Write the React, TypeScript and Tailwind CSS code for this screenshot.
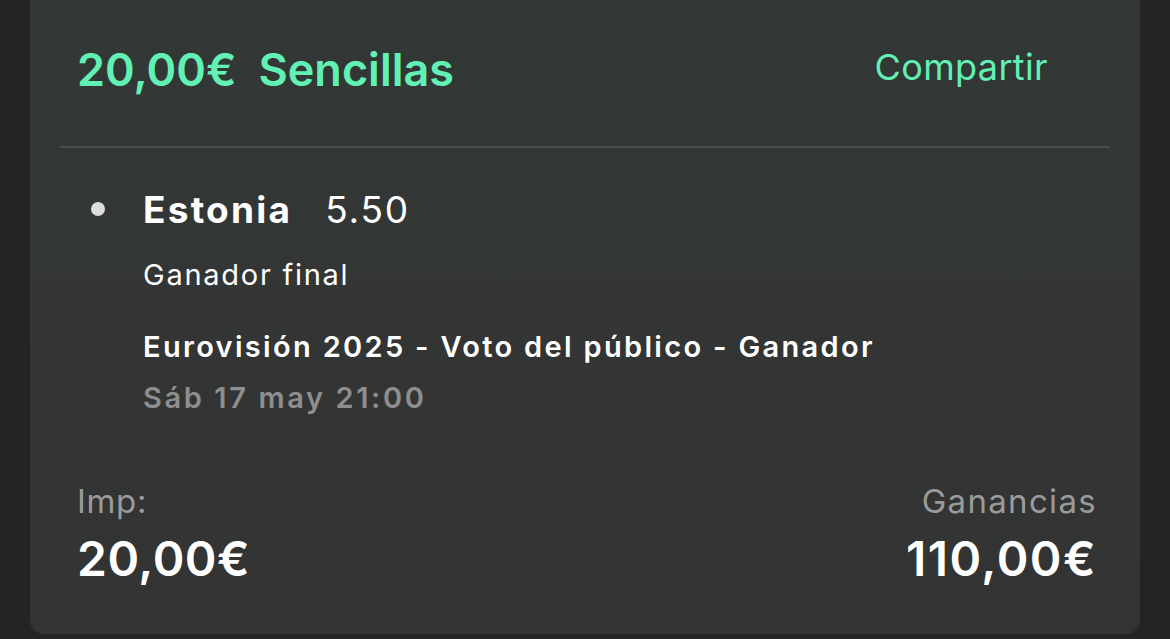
export default function App() {
  return (
    <div
      className="flex h-[639px] w-[1170px] overflow-hidden bg-[#242424] px-[30px]"
      style={{ fontFamily: "Inter, 'Noto Sans', sans-serif" }}
    >
      <div className="flex h-[634px] w-full flex-col rounded-b-[14px] bg-gradient-to-b from-[#323836] to-[#333333]">
        {/* Header */}
        <div className="flex items-start justify-between pl-[47px] pr-[92px]">
          <div className="mt-[42px] flex gap-[22px] text-[45px] font-semibold leading-[56px] text-[#62f1b4]">
            <span>20,00€</span>
            <span>Sencillas</span>
          </div>
          <div className="mt-[45px] text-[36px] leading-[44px] tracking-[0.01em] text-[#62f1b4]">Compartir</div>
        </div>

        {/* Divider */}
        <div className="mx-[30px] mt-[48px] h-[2px] bg-[#4a4e4d]" />

        {/* Selection */}
        <div className="flex pl-[61px]">
          <div className="mt-[54px] h-[14px] w-[14px] shrink-0 rounded-full bg-[#dcdcdc]" />
          <div className="ml-[38px] flex flex-col">
            <div className="mt-[40px] flex gap-[33px] text-[37px] leading-[44px] text-white">
              <span className="font-bold tracking-[0.06em]">Estonia</span>
              <span className="tracking-[0.05em]">5.50</span>
            </div>
            <div className="mt-[25px] text-[29px] leading-[36px] tracking-[0.06em] text-white">Ganador final</div>
            <div className="mt-[36px] text-[29px] font-semibold leading-[36px] tracking-[0.08em] text-white">
              Eurovisión 2025 - Voto del público - Ganador
            </div>
            <div className="mt-[15px] text-[29px] font-semibold leading-[36px] tracking-[0.09em] text-[#8e8e8e]">
              Sáb 17 may 21:00
            </div>
          </div>
        </div>

        {/* Footer */}
        <div className="mt-[65px] flex justify-between pl-[47px] pr-[43px]">
          <div className="flex flex-col">
            <span className="text-[33px] leading-[40px] tracking-[0.02em] text-[#9b9b9b]">Imp:</span>
            <span className="mt-[10px] text-[48px] font-semibold leading-[56px] tracking-[0.01em] text-white">20,00€</span>
          </div>
          <div className="flex flex-col items-end">
            <span className="text-[33px] leading-[40px] tracking-[0.04em] text-[#9b9b9b]">Ganancias</span>
            <span className="mt-[10px] text-[48px] font-semibold leading-[56px] tracking-[0.03em] text-white">110,00€</span>
          </div>
        </div>
      </div>
    </div>
  );
}
